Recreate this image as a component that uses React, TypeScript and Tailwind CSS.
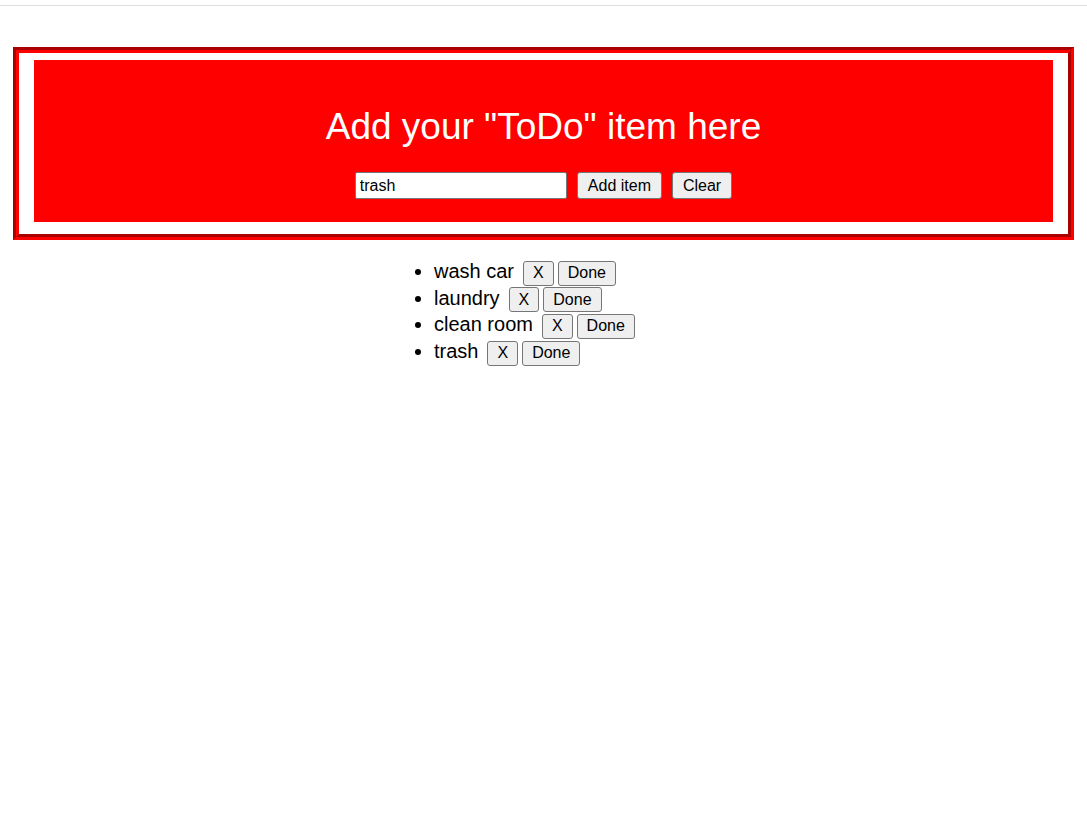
const items = ["wash car", "laundry", "clean room", "trash"];

const btn =
  "bg-[#efefef] border border-[#767676] rounded-[3px] text-black text-[16px] leading-[normal] px-[9px]";

export default function App() {
  return (
    <div className="min-h-[815px] bg-white font-['Liberation_Sans',Arial,sans-serif] text-black">
      <div className="h-[6px] border-b border-[#dedede]" />

      <div className="mx-[13px] mt-[41px] border-[6px] border-[#ff0000] [border-style:groove] [--tw-border-style:groove] px-[15px] pt-[7px] pb-[12px]">
        <div className="bg-[#ff0000] pt-[46px] pb-[23px] text-center">
          <h1 className="m-0 text-[37px] leading-[normal] font-normal text-white">
            Add your "ToDo" item here
          </h1>
          <div className="mt-[24px] flex justify-center gap-[10px]">
            <input
              type="text"
              defaultValue="trash"
              className="w-[212px] h-[27px] bg-white border border-[#767676] rounded-[2px] px-[4px] text-[16px] text-black leading-[normal] outline-none"
            />
            <button className={btn + " h-[27px] px-[10px]"}>Add item</button>
            <button className={btn + " h-[27px] px-[10px]"}>Clear</button>
          </div>
        </div>
      </div>

      <ul className="mt-[20px] ml-[394px] pl-[40px] list-disc list-outside text-[20px] leading-[normal]">
        {items.map((t) => (
          <li key={t} className="h-[26.7px]">
            <span>{t}</span>
            <button className={btn + " h-[25px] px-[8px] ml-[9px] align-baseline"}>X</button>
            <button className={btn + " h-[25px] px-[9px] ml-[4px] align-baseline"}>Done</button>
          </li>
        ))}
      </ul>
    </div>
  );
}
